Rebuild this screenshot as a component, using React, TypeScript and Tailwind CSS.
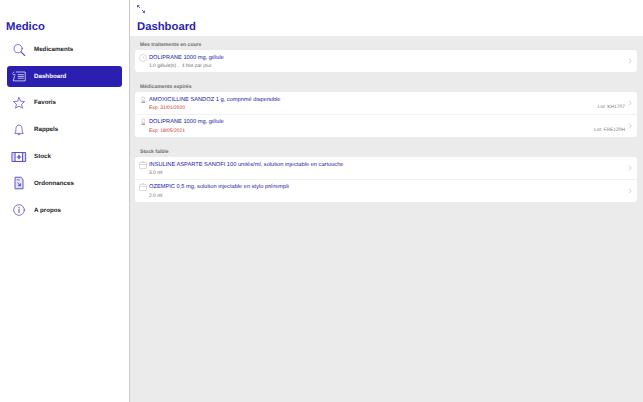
import React from "react";

const ink = "#2a1fb0";

function Icon({ name, active }: { name: string; active?: boolean }) {
  const c = active ? "#ffffff" : "#4a3fc0";
  const common = { fill: "none", stroke: c, strokeWidth: 0.8, strokeLinecap: "round" as const, strokeLinejoin: "round" as const };
  return (
    <svg width="16" height="16" viewBox="-1 -1 18 18" className="shrink-0" {...common}>
      {name === "search" && (<><circle cx="7" cy="6.5" r="4.6" /><path d="M10.4 10 L14.5 14.2" strokeWidth="1.2" /></>)}
      {name === "dash" && (<><path d="M5 3.5 H15 V13.5 H1.5 L3 8" /><path d="M1 5 L2.5 3.5 M1.5 6.5 H3.5 M7 6.5 H13 M7 8.5 H13 M7 10.5 H13" /></>)}
      {name === "star" && (<path d="M8 2 L9.8 6 L14.2 6.4 L10.9 9.4 L11.9 13.8 L8 11.5 L4.1 13.8 L5.1 9.4 L1.8 6.4 L6.2 6 Z" />)}
      {name === "bell" && (<><path d="M3.5 11.5 C4.8 10 4.4 8.5 4.6 6 C4.8 3.6 6.4 2.4 8 2.4 C9.6 2.4 11.2 3.6 11.4 6 C11.6 8.5 11.2 10 12.5 11.5 Z" /><path d="M7 13.2 H9" /></>)}
      {name === "stock" && (<><rect x="0.5" y="3" width="15" height="10" fill="#dcd9f5" strokeWidth="1" /><rect x="4" y="3" width="8" height="10" fill="#ffffff" strokeWidth="1" /><path d="M8 6 V10 M6 8 H10" strokeWidth="1.4" /></>)}
      {name === "doc" && (<><path d="M4 1.5 H10 L12.5 4 V14.5 H4 Z" fill="#e6e4f8" strokeWidth="1" /><path d="M5.8 4.5 H8.5" strokeWidth="0.8" /><path d="M6.5 8 L9.5 11 M9.5 8.8 V11 H7.3" strokeWidth="1.1" /></>)}
      {name === "info" && (<><circle cx="8" cy="8" r="6" /><path d="M8 7.2 V11 M8 5 V5.6" strokeWidth="1.1" /></>)}
    </svg>
  );
}

function NavItem({ icon, label, active }: { icon: string; label: string; active?: boolean }) {
  return (
    <div className={`flex h-[21px] items-center rounded-[3px] pl-[4px] ${active ? "bg-[#2a1fb0] text-white" : "text-[#222222]"}`}>
      <Icon name={icon} active={active} />
      <span className="ml-[7px] text-[6.2px] font-bold">{label}</span>
    </div>
  );
}

function Chevron() {
  return (
    <svg width="4" height="6" viewBox="0 0 4 6" fill="none" stroke="#c4c4c8" strokeWidth="0.8" className="shrink-0">
      <path d="M1 0.7 L3.2 3 L1 5.3" />
    </svg>
  );
}

function RowIcon({ type }: { type: "clock" | "vial" | "box" }) {
  return (
    <svg width="8" height="8" viewBox="0 0 8 8" fill="none" stroke="#b9b9bf" strokeWidth="0.5" className="shrink-0">
      {type === "clock" && (<><circle cx="4" cy="4" r="3.5" /><path d="M4 2 V4 L5.2 4.8" /></>)}
      {type === "vial" && (<><path d="M3 1 H5.4 V4.6 H3 Z" /><path d="M2.4 6.2 H6" stroke="#77777f" strokeWidth="1" /></>)}
      {type === "box" && (<><rect x="0.5" y="1.5" width="7" height="6" rx="0.6" /><path d="M0.5 3.4 H7.5 M3 0.6 H5" /></>)}
    </svg>
  );
}

function Row({ icon, title, sub, red, lot, tall }: { icon: "clock" | "vial" | "box"; title: string; sub: string; red?: boolean; lot?: string; tall?: boolean }) {
  return (
    <div className={`relative flex gap-[2.5px] pl-[3.5px] pr-[10px] ${tall ? "h-[22.5px]" : "h-[22px]"} pt-[3.5px]`}>
      <div><RowIcon type={icon} /></div>
      <div className="min-w-0">
        <div className="text-[5.7px] leading-[8px] text-[#2118a6] whitespace-nowrap">{title}</div>
        <div className={`mt-[1.5px] text-[4.95px] leading-[7px] ${red ? "text-[#c8321e]" : "text-[#6f6f74]"}`}>{sub}</div>
      </div>
      {lot && <div className="absolute right-[12px] top-[16px] -translate-y-1/2 text-[4.9px] text-[#77777c] whitespace-nowrap">{lot}</div>}
      <div className="absolute right-[5px] top-[8px]"><Chevron /></div>
    </div>
  );
}

function Section({ title, className, children }: { title: string; className?: string; children: React.ReactNode }) {
  return (
    <section className={className}>
      <div className="ml-[5px] h-[14px] pt-[6px] text-[5.1px] font-bold leading-[6px] text-[#6c6c70]">{title}</div>
      <div className="divide-y divide-[#f2f2f2] rounded-[3px] bg-white">{children}</div>
    </section>
  );
}

export default function App() {
  return (
    <div className="flex h-[402px] w-[643px] overflow-hidden bg-white [font-family:'Liberation_Sans',Arial,sans-serif] [text-rendering:geometricPrecision]">
      <aside className="w-[130px] shrink-0 border-r border-[#c9c9cc] bg-white px-[7px] pt-[19.5px]">
        <h1 className="-ml-[1px] text-[11.3px] font-bold leading-[15px] text-[#2a1fb0]">Medico</h1>
        <nav className="mt-[4.5px] flex flex-col gap-[5.8px]">
          <NavItem icon="search" label="Medicaments" />
          <NavItem icon="dash" label="Dashboard" active />
          <NavItem icon="star" label="Favoris" />
          <NavItem icon="bell" label="Rappels" />
          <NavItem icon="stock" label="Stock" />
          <NavItem icon="doc" label="Ordonnances" />
          <NavItem icon="info" label="A propos" />
        </nav>
      </aside>
      <main className="flex min-w-0 flex-1 flex-col">
        <header className="h-[36px] shrink-0 bg-white px-[7px] pt-[5px]">
          <svg width="8" height="8" viewBox="0 0 8 8" fill="none" stroke={ink} strokeWidth="0.7" className="block">
            <path d="M0.5 0.5 L3 3 M5 5 L7.5 7.5" />
            <path d="M0.5 2.4 V0.5 H2.4 M5.6 7.5 H7.5 V5.6" />
          </svg>
          <h2 className="mt-[6.5px] text-[11.3px] font-bold leading-[15px] text-[#2a1fb0]">Dashboard</h2>
        </header>
        <div className="flex-1 bg-[#ebebeb] px-[5px] pr-[6px]">
          <Section title="Mes traitements en cours">
            <Row icon="clock" title="DOLIPRANE 1000 mg, gélule" sub={"1.0 gélule(s) ,\u00a0 4 fois par jour"} />
          </Section>
          <Section title="Médicaments expirés" className="mt-[6px]">
            <Row icon="vial" title="AMOXICILLINE SANDOZ 1 g, comprimé dispersible" sub="Exp: 31/01/2020" red lot="Lot: KH1707" tall />
            <Row icon="vial" title="DOLIPRANE 1000 mg, gélule" sub="Exp: 18/05/2021" red lot="Lot: FRE120H" tall />
          </Section>
          <Section title="Stock faible" className="mt-[6px]">
            <Row icon="box" title="INSULINE ASPARTE SANOFI 100 unités/ml, solution injectable en cartouche" sub="3.0 ml" tall />
            <Row icon="box" title="OZEMPIC 0,5 mg, solution injectable en stylo prérempli" sub="2.0 ml" tall />
          </Section>
        </div>
      </main>
    </div>
  );
}
